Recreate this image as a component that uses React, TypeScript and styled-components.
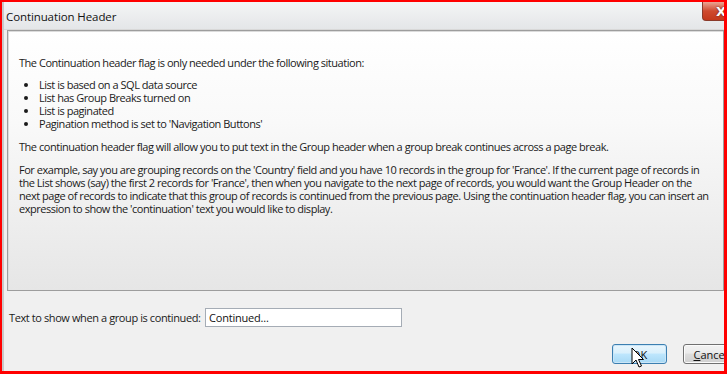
import React from "react";
import styled, { createGlobalStyle } from "styled-components";

const GlobalStyle = createGlobalStyle`
  html, body { margin: 0; padding: 0; }
  body { font-family: "Open Sans", "Noto Sans", Arial, sans-serif; }
  * { box-sizing: border-box; }
`;

const Frame = styled.div`
  width: 727px;
  height: 374px;
  background: #ff0000;
  padding: 2px 3px 3px 2px;
`;

const Window = styled.div`
  position: relative;
  height: 100%;
  background: #f0f0f0;
  border-left: 2px solid #c9c9c9;
  display: flex;
  flex-direction: column;
  overflow: hidden;
`;

const TitleBar = styled.div`
  height: 28px;
  display: flex;
  align-items: flex-start;
  background: linear-gradient(#f4f5f6, #e4e6e8);
  border-bottom: 1px solid #d8d8d8;
`;

const Title = styled.div`
  font-family: "Open Sans", sans-serif;
  font-size: 11.5px;
  color: #111;
  padding: 7px 0 0 2px;
  letter-spacing: -0.1px;
`;

const CloseButton = styled.div`
  margin-left: auto;
  width: 25px;
  height: 19px;
  border-radius: 0 0 0 4px;
  border: 1px solid #8a3a2a;
  border-top: none;
  background: linear-gradient(#e9a593, #cf4a2f 50%, #c3381c);
  color: #fff;
  font: bold 13px "DejaVu Sans", sans-serif;
  display: flex;
  align-items: center;
  justify-content: flex-end;
  margin-right: -3px;
  text-shadow: 0 0 2px #5a1a10;
`;

const Panel = styled.div`
  margin: 0 0 0 3px;
  height: 261px;
  border: 1px solid #9d9d9d;
  box-shadow: inset 1px 1px 0 #dcdcdc;
  background: linear-gradient(#ffffff 0%, #f9f9f9 35%, #e6e6e6 100%);
  padding: 25px 10px 0 11px;
  font-family: "Open Sans", sans-serif;
  font-size: 11px;
  line-height: 13px;
  color: #1a1a1a;
  letter-spacing: -0.47px;
`;

const Para = styled.p<{ $top?: number }>`
  margin: ${(p) => p.$top ?? 0}px 0 0 0;
  white-space: nowrap;
`;

const Bullets = styled.ul`
  margin: 9px 0 0 0;
  padding-left: 20px;
  list-style: disc;
  white-space: nowrap;
`;

const FieldRow = styled.div`
  display: flex;
  align-items: center;
  margin-top: 17px;
  padding-left: 5px;
`;

const Label = styled.label`
  font-family: "Open Sans", sans-serif;
  font-size: 11px;
  letter-spacing: -0.4px;
  color: #1a1a1a;
  width: 196px;
`;

const TextInput = styled.div`
  width: 197px;
  height: 19px;
  background: #fff;
  border: 1px solid #a5acb5;
  font-family: "Open Sans", sans-serif;
  font-size: 11px;
  letter-spacing: -0.2px;
  color: #111;
  padding: 1px 0 0 3px;
`;

const ButtonRow = styled.div`
  display: flex;
  gap: 16px;
  padding-left: 608px;
  margin-top: 17px;
`;

const Button = styled.div<{ $hover?: boolean }>`
  position: relative;
  flex: none;
  width: 55px;
  height: 20px;
  border-radius: 3px;
  border: 1px solid ${(p) => (p.$hover ? "#3c7fb1" : "#707070")};
  background: ${(p) =>
    p.$hover
      ? "linear-gradient(#eaf6fd 0%, #d9f0fc 45%, #bee6fd 50%, #a7d9f5 100%)"
      : "linear-gradient(#f2f2f2 0%, #ebebeb 45%, #dddddd 50%, #cfcfcf 100%)"};
  box-shadow: inset 0 0 0 1px ${(p) => (p.$hover ? "#cbe6f7" : "#fbfbfb")};
  display: flex;
  align-items: center;
  justify-content: center;
  font-family: "Open Sans", sans-serif;
  font-size: 11px;
  color: #111;
`;

const Cursor = styled.svg`
  position: absolute;
  left: 18px;
  top: 2px;
`;

const U = styled.span`
  text-decoration: underline;
`;

export default function App() {
  return (
    <>
      <GlobalStyle />
      <Frame>
        <Window>
          <TitleBar>
            <Title>Continuation Header</Title>
            <CloseButton>X</CloseButton>
          </TitleBar>
          <Panel>
            <Para>The Continuation header flag is only needed under the following situation:</Para>
            <Bullets>
              <li>List is based on a SQL data source</li>
              <li>List has Group Breaks turned on</li>
              <li>List is paginated</li>
              <li>Pagination method is set to 'Navigation Buttons'</li>
            </Bullets>
            <Para $top={10}>
              The continuation header flag will allow you to put text in the Group header when a group break continues across a page break.
            </Para>
            <Para $top={10}>
              For example, say you are grouping records on the 'Country' field and you have 10 records in the group for 'France'. If the current page of records in
              <br />
              the List shows (say) the first 2 records for 'France', then when you navigate to the next page of records, you would want the Group Header on the
              <br />
              next page of records to indicate that this group of records is continued from the previous page. Using the continuation header flag, you can insert an
              <br />
              expression to show the 'continuation' text you would like to display.
            </Para>
          </Panel>
          <FieldRow>
            <Label>Text to show when a group is continued:</Label>
            <TextInput>Continued...</TextInput>
          </FieldRow>
          <ButtonRow>
            <Button $hover>
              OK
              <Cursor width="13" height="22" viewBox="0 0 13 22">
                <path
                  d="M1 1 L1 17 L5 13 L8 20 L10.5 19 L7.5 12.5 L12.5 12.5 Z"
                  fill="#fff"
                  stroke="#000"
                  strokeWidth="1"
                  strokeLinejoin="miter"
                />
              </Cursor>
            </Button>
            <Button>
              <span>
                <U>C</U>ancel
              </span>
            </Button>
          </ButtonRow>
        </Window>
      </Frame>
    </>
  );
}
